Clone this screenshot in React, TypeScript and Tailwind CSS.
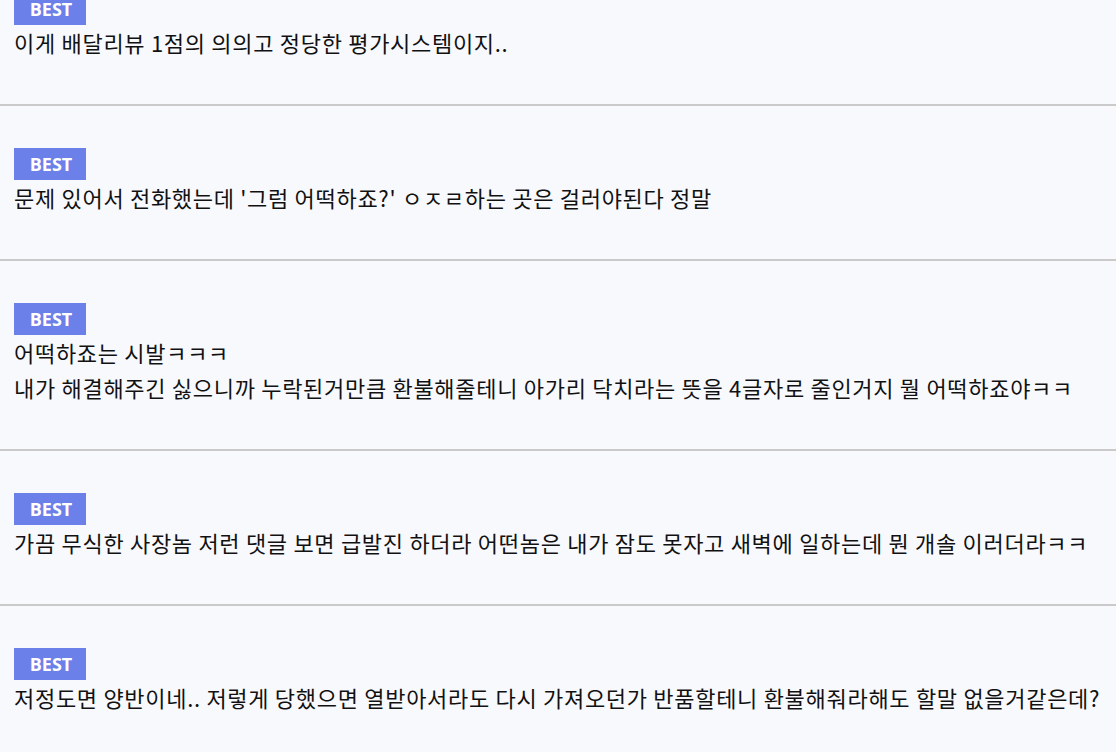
const comments: string[][] = [
  ["이게 배달리뷰 1점의 의의고 정당한 평가시스템이지.."],
  ["문제 있어서 전화했는데 '그럼 어떡하죠?' ㅇㅈㄹ하는 곳은 걸러야된다 정말"],
  [
    "어떡하죠는 시발ㅋㅋㅋ",
    "내가 해결해주긴 싫으니까 누락된거만큼 환불해줄테니 아가리 닥치라는 뜻을 4글자로 줄인거지 뭘 어떡하죠야ㅋㅋ",
  ],
  ["가끔 무식한 사장놈 저런 댓글 보면 급발진 하더라 어떤놈은 내가 잠도 못자고 새벽에 일하는데 뭔 개솔 이러더라ㅋㅋ"],
  ["저정도면 양반이네.. 저렇게 당했으면 열받아서라도 다시 가져오던가 반품할테니 환불해줘라해도 할말 없을거같은데?"],
];

function Best() {
  return (
    <span className="inline-flex h-8 w-[72px] items-center justify-center bg-[#6b80e8] pl-[2px] font-['Open_Sans',sans-serif] text-[18px] font-bold leading-none text-white">
      BEST
    </span>
  );
}

export default function App() {
  return (
    <div className="h-[752px] overflow-hidden bg-[#f8f9fd] font-['Noto_Sans_CJK_KR','Noto_Sans',sans-serif] text-[#111]">
      <div className="-mt-[49px]">
        {comments.map((lines, i) => (
          <div key={i} className="border-b-2 border-[#cacaca] px-[14px] pb-[44px] pt-[42px]">
            <Best />
            {lines.map((l, j) => (
              <p key={j} className="whitespace-nowrap text-[22px] leading-[35px] tracking-[0.7px]">{l}</p>
            ))}
          </div>
        ))}
      </div>
    </div>
  );
}
